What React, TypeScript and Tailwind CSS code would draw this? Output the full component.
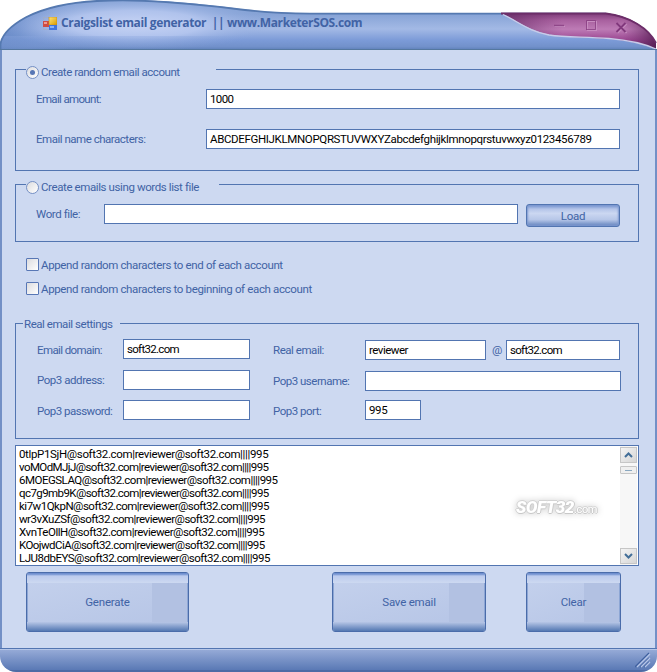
import React from "react";

type BoxProps = { className?: string; children?: React.ReactNode };

const Field = ({ className = "", children }: BoxProps) => (
  <div className={`h-5 shrink-0 border border-[#5275b1] bg-white pl-[3px] leading-[19px] whitespace-pre text-black ${className}`}>
    {children}
  </div>
);

const Group = ({ className = "", children }: BoxProps) => (
  <section className={`relative border border-[#5275b1] ${className}`}>{children}</section>
);

const Radio = ({ checked = false }: { checked?: boolean }) => (
  <span className="flex size-[13px] shrink-0 items-center justify-center rounded-full border border-[#7590c4] bg-linear-to-br from-[#dcdcdf] to-white">
    {checked && <span className="size-[5px] rounded-full bg-[#5877b5]" />}
  </span>
);

const Check = ({ className = "", children }: BoxProps) => (
  <label className="flex h-[13px] items-center gap-[2px]">
    <span className="size-[13px] shrink-0 rounded-[1px] border border-[#5877b5] bg-linear-to-br from-[#dcdcdf] to-white" />
    <span className={className}>{children}</span>
  </label>
);

const BigButton = ({ className = "", shade, children }: BoxProps & { shade: string }) => (
  <button
    className={`flex h-[60px] flex-col overflow-hidden rounded-[3px] border border-[#4a6caa] shadow-[inset_0_0_2px_1px_#6f8fca] ${className}`}
  >
    <span className="h-[10px] w-full bg-linear-to-b from-[#6f8fcf] from-10% via-[#bccbed] via-30% to-[#cdd9f1]" />
    <span className="relative flex h-[39px] w-full items-center justify-center border-x border-[#8da6d4] bg-linear-to-br from-[#c3d0ec] to-[#b6c5e6]">
      <span className={`absolute inset-y-0 right-0 bg-[#b2c1e2] ${shade}`} />
      <span className="relative -top-px">{children}</span>
    </span>
    <span className="h-[9px] w-full bg-linear-to-b from-[#b7c6e6] to-[#5478b2]" />
  </button>
);

const ScrollButton = ({ d }: { d: string }) => (
  <div className="flex h-4 w-[17px] items-center justify-center border border-[#c6c6c6] bg-linear-to-br from-[#f4f4f4] to-[#d6d6d6]">
    <svg width="9" height="6" viewBox="0 0 9 6" fill="none" stroke="#426e98" strokeWidth="2">
      <path d={d} />
    </svg>
  </div>
);

const TitleArt = () => (
  <svg className="absolute inset-0" width="657" height="50" viewBox="0 0 657 50">
    <defs>
      <linearGradient id="bar" x1="0" y1="0" x2="0" y2="50" gradientUnits="userSpaceOnUse">
        <stop offset="0.28" stopColor="#86a3d6" />
        <stop offset="0.58" stopColor="#a3b9e5" />
        <stop offset="0.8" stopColor="#7c9bd8" />
        <stop offset="0.93" stopColor="#7291cb" />
        <stop offset="1" stopColor="#5c7fb8" />
      </linearGradient>
      <linearGradient id="barLeft" x1="0" y1="0" x2="80" y2="0" gradientUnits="userSpaceOnUse">
        <stop offset="0" stopColor="#6c8dc9" />
        <stop offset="0.25" stopColor="#6f90cc" stopOpacity="0.9" />
        <stop offset="1" stopColor="#7c9bd8" stopOpacity="0" />
      </linearGradient>
      <radialGradient id="glow" cx="0.5" cy="0.5" r="0.5">
        <stop offset="0" stopColor="#c6d3f4" />
        <stop offset="0.5" stopColor="#b7c8f0" stopOpacity="0.85" />
        <stop offset="1" stopColor="#92abdf" stopOpacity="0" />
      </radialGradient>
      <linearGradient id="plum" x1="0" y1="13" x2="0" y2="49" gradientUnits="userSpaceOnUse">
        <stop offset="0" stopColor="#7c3a77" />
        <stop offset="0.2" stopColor="#a8609f" />
        <stop offset="0.45" stopColor="#bd7bb5" />
        <stop offset="0.55" stopColor="#b26aaa" />
        <stop offset="0.75" stopColor="#9a4590" />
        <stop offset="1" stopColor="#5b2158" />
      </linearGradient>
      <linearGradient id="plumEdge" x1="500" y1="0" x2="657" y2="0" gradientUnits="userSpaceOnUse">
        <stop offset="0" stopColor="#5f2961" stopOpacity="0.75" />
        <stop offset="0.4" stopColor="#7a3a77" stopOpacity="0" />
        <stop offset="0.78" stopColor="#7a3a77" stopOpacity="0" />
        <stop offset="1" stopColor="#521d50" stopOpacity="0.85" />
      </linearGradient>
      <clipPath id="barClip">
        <path d="M0 50V44C2 34 12 25 26 17C45 7 72 2 97 .5Q120 -.5 143 .3C185 2 210 5 245 9.500Q275 13 310 13H606C630 16 649 28 656 43V50Z" />
      </clipPath>
    </defs>
    <g clipPath="url(#barClip)">
      <rect width="657" height="50" fill="url(#bar)" />
      <rect width="80" height="50" fill="url(#barLeft)" />
      <ellipse cx="135" cy="24" rx="135" ry="27" fill="url(#glow)" />
      <rect width="657" height="14" y="36" fill="url(#bar)" opacity="0.35" />
    </g>
    <path d="M.5 50V44C2 34 12 25 26 17.3C45 7.500 72 2.300 97 1Q120 0 143 .8C185 2.500 210 5.500 245 10Q275 13.500 310 13.700H606" fill="none" stroke="#5579b0" strokeWidth="1.800" />
    <path d="M501 13H606C630 16 649 28 656 43V49C644 44 632 41 609 39C586 37 567 38 549 34.500C528 30 520 22 501 13Z" fill="url(#plum)" />
    <path d="M501 13H606C630 16 649 28 656 43V49C644 44 632 41 609 39C586 37 567 38 549 34.500C528 30 520 22 501 13Z" fill="url(#plumEdge)" />
    <path d="M501 13.500H606C630 16.500 649 28.500 656 43" fill="none" stroke="#6c2d68" strokeWidth="1.800" />
    <path d="M503 14.500C520 22.500 528 31 549 35C567 37.500 586 36.500 609 38.500C632 40.500 644 43.500 656 49" fill="none" stroke="#c8cce9" strokeWidth="1.300" />
    <path d="M0 49.500H657" stroke="#55789f" />
    <g fill="none" stroke="#c78dc0">
      <path d="M554.500 26.500H565" />
      <rect x="587.500" y="21.500" width="9" height="9" />
      <path d="M617.500 24L626.500 33M626.500 24L617.500 33" strokeWidth="1.500" />
    </g>
    <g fill="none" stroke="#81387c">
      <path d="M554 25.500H564" strokeWidth="1.500" opacity=".7" />
      <path d="M586.500 30V20.500H595.500M586.500 29.500H595.500V20.500" opacity=".7" />
      <path d="M616.500 23L625.500 32M625.500 23L616.500 32" strokeWidth="1.800" />
    </g>
  </svg>
);

const FormsIcon = () => (
  <svg width="14" height="13" viewBox="0 0 14 13" className="shrink-0">
    <defs>
      <linearGradient id="gold" x1="0" y1="0" x2="1" y2="1">
        <stop stopColor="#ffe377" />
        <stop offset="1" stopColor="#d99a00" />
      </linearGradient>
    </defs>
    <path d="M.5 3V.5H6M.5 9V12.500H6" fill="none" stroke="#a6acbb" opacity=".6" />
    <rect x="0" y="4" width="6" height="6" fill="#cf4c43" />
    <rect x="1" y="5" width="3" height="2" fill="#ee9a90" />
    <rect x="6" y="0" width="8" height="8" fill="url(#gold)" stroke="#c58b10" strokeWidth=".6" />
    <rect x="6" y="8" width="8" height="5" fill="#3f74dd" />
    <rect x="7" y="9" width="4" height="2" fill="#86b0fa" />
  </svg>
);

const accounts = [
  { name: "0tlpP1SjH", spacing: "tracking-[-0.35px]" },
  { name: "voMOdMJjJ", spacing: "tracking-[-0.58px]" },
  { name: "6MOEGSLAQ", spacing: "tracking-[-0.5px]" },
  { name: "qc7g9mb9K", spacing: "tracking-[-0.58px]" },
  { name: "ki7w1QkpN", spacing: "tracking-[-0.5px]" },
  { name: "wr3vXuZSf", spacing: "tracking-[-0.52px]" },
  { name: "XvnTeOllH", spacing: "tracking-[-0.48px]" },
  { name: "KOojwdCiA", spacing: "tracking-[-0.56px]" },
  { name: "LJU8dbEYS", spacing: "tracking-[-0.5px]" },
];

export default function App() {
  return (
    <div className="flex h-[672px] w-[657px] flex-col overflow-hidden bg-white font-['Roboto',sans-serif] text-[11.5px] leading-[14px] font-normal tracking-[-0.36px] whitespace-nowrap text-[#4163a5]">
      <header className="relative h-[50px] shrink-0">
        <TitleArt />
        <div className="relative flex items-center gap-[4px] pt-[16px] pl-[43px]">
          <FormsIcon />
          <h1 className="font-['Open_Sans',sans-serif] text-[12px] leading-[14px] font-bold tracking-[-0.36px] whitespace-pre text-[#4163a5]">
            {"Craigslist email generator  || www.MarketerSOS.com"}
          </h1>
        </div>
      </header>

      <div className="flex min-h-0 grow flex-col overflow-hidden rounded-b-[16px]">
        <main className="flex h-[598px] shrink-0 flex-col border-x-2 border-[#7390c6] bg-[#cdd9f1] pt-[19px] pl-[13px]">
          <Group className="h-[102px] w-[624px] shrink-0 pt-[19px] pl-5">
            <div className="absolute -top-[5px] left-[10px] flex h-[14px] w-[190px] items-center gap-[2px] bg-[#cdd9f1]">
              <Radio checked />
              <span className="tracking-[-0.45px]">Create random email account</span>
            </div>
            <div className="flex items-center">
              <span className="w-[170px] tracking-[-0.65px]">Email amount:</span>
              <Field className="w-[414px] tracking-[-0.65px]">1000</Field>
            </div>
            <div className="mt-5 flex items-center">
              <span className="w-[170px] tracking-[-0.48px]">Email name characters:</span>
              <Field className="w-[414px] tracking-[-0.35px]">ABCDEFGHIJKLMNOPQRSTUVWXYZabcdefghijklmnopqrstuvwxyz0123456789</Field>
            </div>
          </Group>

          <Group className="mt-[13px] h-[58px] w-[624px] shrink-0 pt-[19px] pl-5">
            <div className="absolute -top-[5px] left-[10px] flex h-[14px] w-[193px] items-center gap-[2px] bg-[#cdd9f1]">
              <Radio />
              <span className="tracking-[-0.4px]">Create emails using words list file</span>
            </div>
            <div className="flex items-start">
              <span className="w-[68px] pt-[3px] tracking-[-0.4px]">Word file:</span>
              <Field className="w-[414px]" />
              <button className="ml-2 h-[23px] w-[94px] rounded-[3px] border border-[#5275b1] bg-[linear-gradient(#7895d0,#b5c5e9_20%,#cbd7f1_40%,#b6c6e8_70%,#6282bc)] tracking-[-0.2px] shadow-[inset_0_0_2px_1px_#7d99d0]">
                Load
              </button>
            </div>
          </Group>

          <div className="mt-4 ml-[11px] flex shrink-0 flex-col gap-[11px]">
            <Check>Append random characters to end of each account</Check>
            <Check>Append random characters to beginning of each account</Check>
          </div>

          <Group className="mt-7 h-[116px] w-[624px] shrink-0">
            <div className="absolute -top-[7px] left-[7px] h-[14px] w-[97px] bg-[#cdd9f1] pl-[1px] tracking-[-0.45px]">Real email settings</div>
            <div className="flex pt-[15px] pl-5">
              <div className="w-[237px]">
                <div className="flex items-center">
                  <span className="w-[87px] pt-[2px] pl-px tracking-[-0.6px]">Email domain:</span>
                  <Field className="w-[127px] tracking-[-0.7px]">soft32.com</Field>
                </div>
                <div className="mt-[11px] flex items-center">
                  <span className="w-[87px] pl-px tracking-[-0.45px]">Pop3 address:</span>
                  <Field className="w-[127px]" />
                </div>
                <div className="mt-[10px] flex items-center">
                  <span className="w-[87px] pt-[2px] pl-px tracking-[-0.5px]">Pop3 password:</span>
                  <Field className="w-[127px]" />
                </div>
              </div>
              <div className="pt-[1px]">
                <div className="flex items-center">
                  <span className="w-[92px] tracking-[-0.45px]">Real email:</span>
                  <Field className="w-[121px] tracking-[-0.5px]">reviewer</Field>
                  <span className="w-5 pl-[6px]">@</span>
                  <Field className="w-[114px] tracking-[-0.7px]">soft32.com</Field>
                </div>
                <div className="mt-[11px] flex items-center">
                  <span className="w-[92px] tracking-[-0.5px]">Pop3 username:</span>
                  <Field className="w-[256px]" />
                </div>
                <div className="mt-[9px] flex items-center">
                  <span className="w-[92px] pt-[2px] tracking-[-0.5px]">Pop3 port:</span>
                  <Field className="w-[56px]">995</Field>
                </div>
              </div>
            </div>
          </Group>

          <div className="relative mt-[6px] flex h-[121px] w-[624px] shrink-0 justify-between border border-[#5275b1] bg-white">
            <div className="pt-[2px] pl-[3px] leading-[13px] text-black">
              {accounts.map(({ name, spacing }) => (
                <div key={name} className={spacing}>{name}@soft32.com|reviewer@soft32.com||||995</div>
              ))}
            </div>
            <div className="mr-[1px] flex w-[17px] flex-col bg-[#f7f7f7] pt-px pb-px">
              <ScrollButton d="M1 5L4.500 1.500L8 5" />
              <div className="mt-[3px] flex h-2 items-center justify-center rounded-[1px] border border-[#c6c6c6] bg-[#efefef]">
                <span className="h-px w-[7px] bg-[#8aa8c0]" />
              </div>
              <div className="mt-auto">
                <ScrollButton d="M1 1L4.500 4.500L8 1" />
              </div>
            </div>
            <div className="absolute top-[52px] left-[500px] flex items-baseline italic text-white drop-shadow-[0_0_3px_#d0d0d0] [text-shadow:1px_0_#ccc,-1px_0_#d4d4d4,0_1px_#c8c8c8,0_-1px_#d4d4d4]">
              <span className="text-[17px] leading-[18px] font-black tracking-[-0.4px]">SOFT32</span>
              <span className="text-[11px] leading-[18px] font-normal not-italic">.com</span>
            </div>
          </div>

          <div className="mt-[6px] ml-[11px] flex shrink-0 tracking-[-0.2px]">
            <BigButton className="w-[163px]" shade="w-[35px]">Generate</BigButton>
            <BigButton className="ml-[143px] w-[154px]" shade="w-[35px]">Save email</BigButton>
            <BigButton className="ml-10 w-[95px]" shade="w-[35px]">Clear</BigButton>
          </div>
        </main>
        <footer className="flex h-6 shrink-0 justify-end border-t border-b-2 border-t-[#5275b1] border-b-[#4d6ba5] bg-linear-to-b from-[#98acd8] to-[#5a79b5] shadow-[inset_0_1px_#b5c6e8]">
          <svg width="16" height="16" viewBox="0 0 16 16" className="mt-[3px] mr-[6px]" fill="none">
            <path d="M0 15L14 1M5 15L14 6M9 15L14 10" stroke="#3f609f" strokeWidth="1.300" />
            <path d="M2 15L15 2M6 15L15 6M10 15L15 10" stroke="#b5c5e8" strokeWidth="1.300" />
          </svg>
        </footer>
      </div>
    </div>
  );
}
